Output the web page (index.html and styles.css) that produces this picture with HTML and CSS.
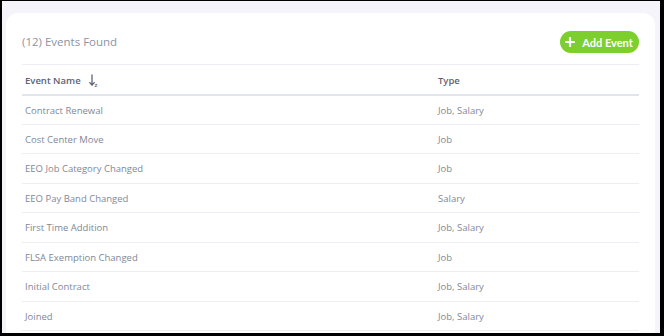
FILE: index.html
```html
<!DOCTYPE html>
<html lang="en">
<head>
<meta charset="utf-8">
<title>Events</title>
<link rel="stylesheet" href="styles.css">
</head>
<body>
<div class="frame">
  <section class="card">
    <header class="card-head">
      <h2 class="count">(12) Events Found</h2>
      <button class="btn-add" type="button">
        <svg class="plus" width="10" height="10" viewBox="0 0 10 10" aria-hidden="true">
          <path d="M5 1v8M1 5h8" stroke="#fff" stroke-width="2.2" stroke-linecap="round"/>
        </svg>
        <span>Add Event</span>
      </button>
    </header>
    <table class="events">
      <thead>
        <tr>
          <th class="col-name">Event Name
            <svg class="sort" width="10" height="13" viewBox="0 0 10 13" aria-hidden="true">
              <path d="M3 1v10M0.8 8.6L3 11.2 5.2 8.6" fill="none" stroke="#5c6477" stroke-width="1.3" stroke-linecap="round" stroke-linejoin="round"/>
              <text x="5.6" y="12.5" font-size="6" fill="#5c6477" font-family="Open Sans, sans-serif">z</text>
            </svg>
          </th>
          <th class="col-type">Type</th>
        </tr>
      </thead>
      <tbody>
        <tr><td>Contract Renewal</td><td>Job, Salary</td></tr>
        <tr><td>Cost Center Move</td><td>Job</td></tr>
        <tr><td>EEO Job Category Changed</td><td>Job</td></tr>
        <tr><td>EEO Pay Band Changed</td><td>Salary</td></tr>
        <tr><td>First Time Addition</td><td>Job, Salary</td></tr>
        <tr><td>FLSA Exemption Changed</td><td>Job</td></tr>
        <tr><td>Initial Contract</td><td>Job, Salary</td></tr>
        <tr><td>Joined</td><td>Job, Salary</td></tr>
      </tbody>
    </table>
  </section>
</div>
</body>
</html>
```

FILE: styles.css
```css
* { box-sizing: border-box; }

html, body {
  margin: 0;
  height: 100%;
  overflow: hidden;
}

body {
  font-family: "Open Sans", "Noto Sans", sans-serif;
  background: #000;
}

.frame {
  height: 100%;
  border-style: solid;
  border-color: #000;
  border-width: 1px 4px 3px 2px;
  background: #f4f4fa;
  padding: 12px 5px 0 4px;
  overflow: hidden;
}

.card {
  background: #fff;
  border-radius: 12px 12px 0 0;
  padding: 18px 16px 0 16px;
  height: 400px;
}

.card-head {
  display: flex;
  align-items: center;
  justify-content: space-between;
  height: 22px;
  margin-bottom: 11px;
}

.count {
  margin: 0;
  font-size: 11.5px;
  font-weight: 400;
  color: #8e93a2;
  position: relative;
  top: -1px;
}

.btn-add {
  display: flex;
  align-items: center;
  justify-content: center;
  gap: 7px;
  height: 22px;
  width: 79px;
  padding: 0 1px 0 0;
  border: 0;
  border-radius: 11px;
  background: #7ccf2c;
  color: #fff;
  font-family: Lato, "Open Sans", sans-serif;
  font-size: 11px;
  font-weight: 700;
  white-space: nowrap;
}

.events {
  width: 100%;
  border-collapse: collapse;
  border-top: 1px solid #eceef3;
}

.events th,
.events td {
  text-align: left;
  padding: 0 3px;
}

.events th {
  height: 30px;
  padding-top: 3px;
  font-size: 9.5px;
  font-weight: 600;
  color: #5c6477;
  border-bottom: 2px solid #e3e5ec;
}

.col-name { width: 413px; }

.sort {
  vertical-align: -3px;
  margin-left: 6px;
}

.events td {
  height: 29.5px;
  padding-top: 1px;
  font-size: 9.5px;
  color: #818898;
  border-bottom: 1px solid #eceef3;
}
```
